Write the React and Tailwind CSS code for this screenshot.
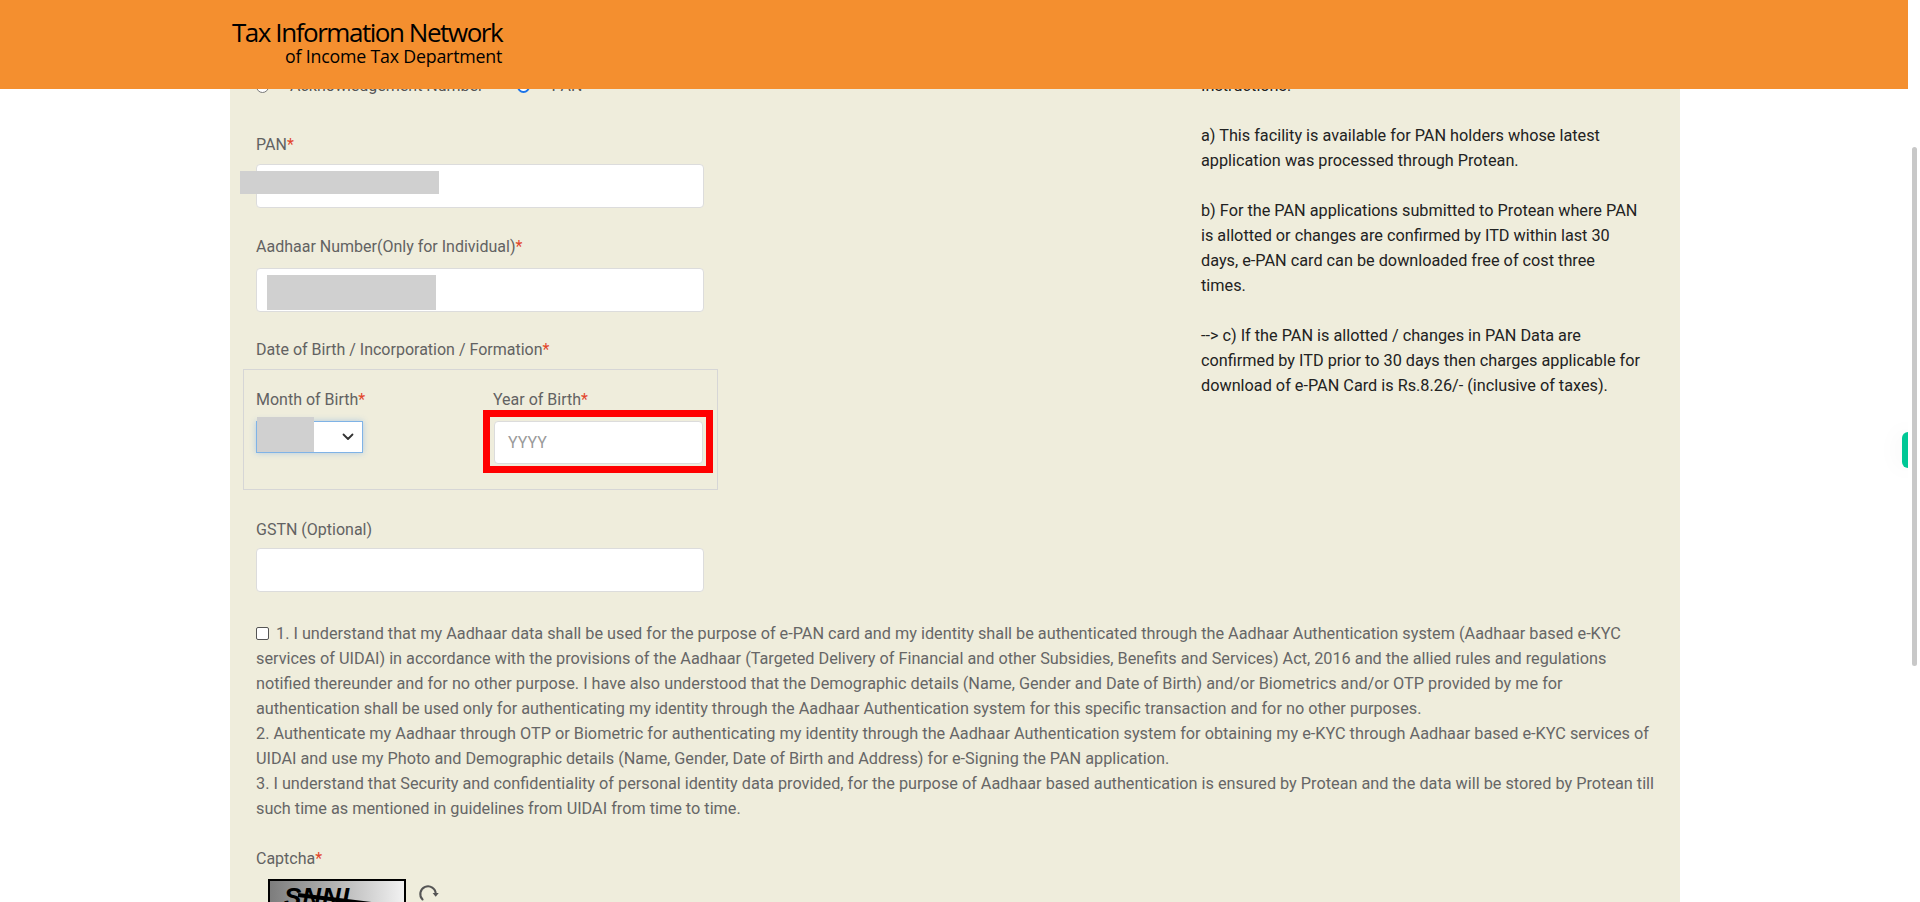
import React from "react";

const Req = () => <span className="text-[#e2452b]">*</span>;

function Refresh() {
  return (
    <svg width="22" height="22" viewBox="0 0 20 20" fill="none" className="ml-[11px] mt-[4px]">
      <path d="M5.05 14.95 A7 7 0 1 1 17 10" stroke="#555" strokeWidth="1.9" strokeLinecap="round" />
      <path d="M14.2 9.2 L17 12.6 L19.8 9.2 Z" fill="#555" />
    </svg>
  );
}

export default function App() {
  const label = "text-[16px] leading-6 text-[#626262] font-['Roboto',sans-serif]";
  const input = "block w-[448px] h-[44px] bg-white border border-[#dcdcdc] rounded-[4px]";
  return (
    <div className="relative w-[1920px] h-[902px] overflow-hidden bg-white flex font-['Roboto',sans-serif]">
      <div className="relative w-[1908px] h-full">
        {/* fixed header overlaying scrolled content */}
        <header className="absolute top-0 left-0 right-0 h-[89px] bg-[#F48F2F] z-10">
          <div className="inline-flex flex-col items-end pl-[232px] pt-[17px] text-black font-['Open_Sans','Noto_Sans',sans-serif]">
            <span className="text-[26px] leading-[30px] tracking-[-1.45px]">Tax Information Network</span>
            <span className="mt-[1px] text-[17.8px] leading-[17px] tracking-[-0.2px]">of Income Tax Department</span>
          </div>
        </header>

        <main className="pl-[230px] h-full">
          <div className="w-[1450px] h-full bg-[#EFEDDC] px-[26px] pt-[74px]">
            <div className="flex">
              {/* left form column */}
              <div className="w-[448px] flex flex-col">
                <div className="mt-[2px] h-[20px] flex items-center text-[16px] text-[#555]">
                  <span className="shrink-0 w-[13px] h-[13px] rounded-full border border-[#777] bg-white" />
                  <span className="ml-[21px]">Acknowledgement Number</span>
                  <span className="shrink-0 ml-[34px] w-[13px] h-[13px] rounded-full border-2 border-[#1a73e8] bg-white" />
                  <span className="ml-[21px]">PAN</span>
                </div>

                <div className={`mt-[37px] ${label}`}>PAN<Req /></div>
                <div className={`mt-[7px] relative ${input}`}>
                  <div className="absolute left-[-17px] top-[6px] w-[199px] h-[23px] bg-[#d0d0d0]" />
                </div>

                <div className={`mt-[27px] ${label}`}>Aadhaar Number(Only for Individual)<Req /></div>
                <div className={`mt-[9px] relative ${input}`}>
                  <div className="absolute left-[10px] top-[6px] w-[169px] h-[35px] bg-[#d0d0d0]" />
                </div>

                <div className={`mt-[26px] ${label}`}>Date of Birth / Incorporation / Formation<Req /></div>
                <div className="mt-[7px] ml-[-13px] w-[475px] h-[121px] border border-[#d6d6d6] pt-[18px] px-[12px] flex">
                  <div className="w-[237px] flex flex-col">
                    <div className={label}>Month of Birth<Req /></div>
                    <div className="mt-[9px] relative w-[107px] h-[32px] bg-white border border-[#7fb3e6] shadow-[0_0_6px_rgba(100,160,230,0.45)] flex items-center justify-end pr-[6px]">
                      <div className="absolute left-0 top-[-5px] w-[57px] h-[35px] bg-[#d0d0d0]" />
                      <svg width="12" height="8" viewBox="0 0 12 8" fill="none" className="mr-[2px]">
                        <path d="M1.5 1.5 L6 6 L10.5 1.5" stroke="#333" strokeWidth="1.8" strokeLinecap="round" strokeLinejoin="round" />
                      </svg>
                    </div>
                  </div>
                  <div className="flex flex-col">
                    <div className={label}>Year of Birth<Req /></div>
                    <div className="mt-[9px] ml-[1px] relative w-[209px] h-[43px]">
                      <div className="absolute left-[-11px] top-[-11px] w-[230px] h-[63px] border-[7px] border-[#ff0000]" />
                      <div className="relative w-full h-full bg-white border border-[#dcdcdc] rounded-[4px] flex items-center pl-[13px] text-[16px] text-[#9a9a9a]">
                        YYYY
                      </div>
                    </div>
                  </div>
                </div>

                <div className={`mt-[28px] ${label}`}>GSTN (Optional)</div>
                <div className={`mt-[6px] ${input}`} />
              </div>

              {/* instructions column */}
              <div className="ml-[497px] mt-[-1px] text-[16.25px] leading-[25px] text-[#222] whitespace-nowrap font-['Roboto',sans-serif]">
                <div>Instructions:</div>
                <div className="h-[25px]" />
                <div>a) This facility is available for PAN holders whose latest</div>
                <div>application was processed through Protean.</div>
                <div className="h-[25px]" />
                <div>b) For the PAN applications submitted to Protean where PAN</div>
                <div>is allotted or changes are confirmed by ITD within last 30</div>
                <div>days, e-PAN card can be downloaded free of cost three</div>
                <div>times.</div>
                <div className="h-[25px]" />
                <div>--&gt; c) If the PAN is allotted / changes in PAN Data are</div>
                <div>confirmed by ITD prior to 30 days then charges applicable for</div>
                <div>download of e-PAN Card is Rs.8.26/- (inclusive of taxes).</div>
              </div>
            </div>

            {/* consent */}
            <div className="mt-[29px] text-[16.25px] leading-[25px] text-[#666] whitespace-nowrap font-['Roboto',sans-serif]">
              <div className="flex items-center">
                <span className="shrink-0 inline-block w-[13px] h-[13px] border border-[#555] rounded-[2px] bg-white mr-[7px]" />
                <span>1. I understand that my Aadhaar data shall be used for the purpose of e-PAN card and my identity shall be authenticated through the Aadhaar Authentication system (Aadhaar based e-KYC</span>
              </div>
              <div>services of UIDAI) in accordance with the provisions of the Aadhaar (Targeted Delivery of Financial and other Subsidies, Benefits and Services) Act, 2016 and the allied rules and regulations</div>
              <div>notified thereunder and for no other purpose. I have also understood that the Demographic details (Name, Gender and Date of Birth) and/or Biometrics and/or OTP provided by me for</div>
              <div>authentication shall be used only for authenticating my identity through the Aadhaar Authentication system for this specific transaction and for no other purposes.</div>
              <div>2. Authenticate my Aadhaar through OTP or Biometric for authenticating my identity through the Aadhaar Authentication system for obtaining my e-KYC through Aadhaar based e-KYC services of</div>
              <div>UIDAI and use my Photo and Demographic details (Name, Gender, Date of Birth and Address) for e-Signing the PAN application.</div>
              <div>3. I understand that Security and confidentiality of personal identity data provided, for the purpose of Aadhaar based authentication is ensured by Protean and the data will be stored by Protean till</div>
              <div>such time as mentioned in guidelines from UIDAI from time to time.</div>
            </div>

            <div className={`mt-[26px] ${label}`}>Captcha<Req /></div>
            <div className="mt-[8px] ml-[12px] flex items-start">
              <div className="relative w-[138px] h-[45px] border-2 border-black bg-gradient-to-r from-[#7d7d7d] to-[#f2f2f2] overflow-hidden">
                <span className="absolute left-[14px] top-[1px] text-[26px] leading-[30px] font-bold italic text-black tracking-[1px] font-['Liberation_Sans',sans-serif]">SNNL</span>
                <div className="absolute left-[28px] top-[12px] w-[115px] h-[4px] bg-black rotate-[7deg] origin-left" />
              </div>
              <Refresh />
            </div>
          </div>
        </main>

        {/* side feedback tab */}
        <div className="absolute left-[1902px] top-[432px] w-[8px] h-[36px] rounded-l-[6px] bg-[#00C896] shadow-[0_0_24px_rgba(0,0,0,0.08)]" />
      </div>

      {/* scrollbar */}
      <div className="w-[12px] h-full bg-white relative">
        <div className="absolute left-[4px] top-[147px] w-[5px] h-[519px] rounded-full bg-[#c8c8c8]" />
      </div>
    </div>
  );
}
